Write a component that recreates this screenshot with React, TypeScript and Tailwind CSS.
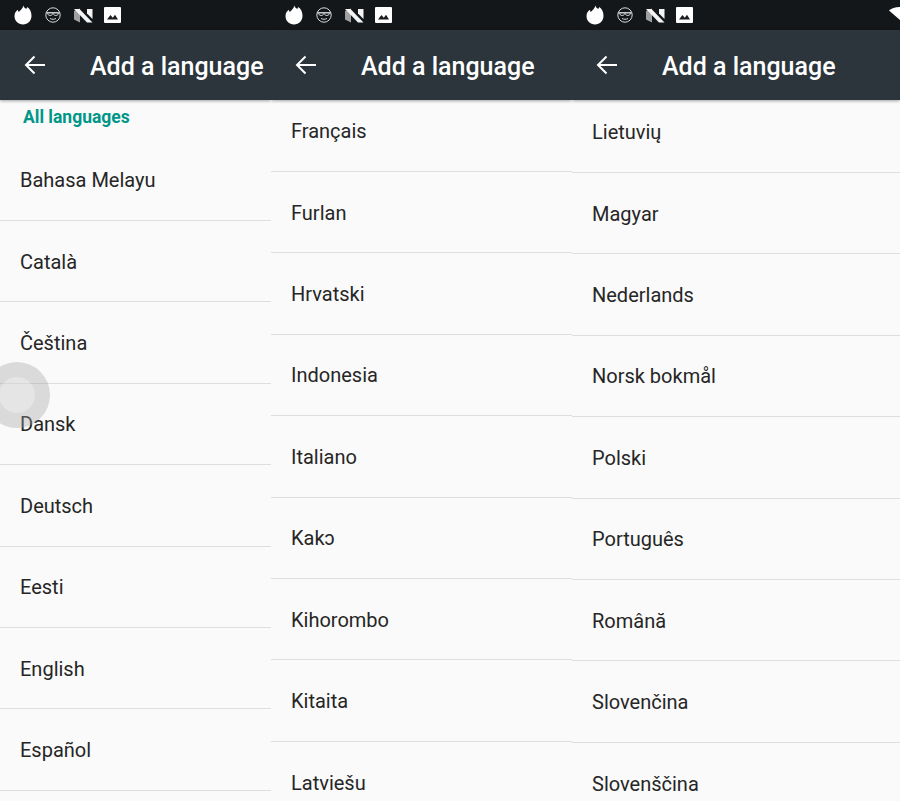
import React from 'react';

const COLUMNS = [
  {
    width: 'w-[271px]',
    items: ['Bahasa Melayu', 'Català', 'Čeština', 'Dansk', 'Deutsch', 'Eesti', 'English', 'Español'],
    header: true,
    offset: '',
  },
  {
    width: 'w-[301px]',
    items: ['Français', 'Furlan', 'Hrvatski', 'Indonesia', 'Italiano', 'Kakɔ', 'Kihorombo', 'Kitaita', 'Latviešu'],
    header: false,
    offset: '-mt-[9.500px]',
  },
  {
    width: 'w-[328px]',
    items: ['Lietuvių', 'Magyar', 'Nederlands', 'Norsk bokmål', 'Polski', 'Português', 'Română', 'Slovenčina', 'Slovenščina'],
    header: false,
    offset: '-mt-[8.500px]',
  },
];

function StatusIcons() {
  return (
    <div className="flex items-center">
      {/* Flame */}
      <svg width="18" height="20" viewBox="0 0 18 20" className="ml-[14px]">
        <path
          d="M9.5 0.5c.4 2.2 1.6 3 3 3.2.4-.5.6-1 .7-1.6C15.900 4 17.500 6.700 17.500 10.800 17.500 15.900 13.900 19.500 9 19.500S.5 15.900.5 11C.5 7.800 2.300 6 4 4.800c0 1 .2 1.700.8 2.200C6.300 5.500 8.800 3.500 9.500 .5z"
          fill="#fff"
        />
      </svg>
      {/* Face with sunglasses */}
      <svg width="16" height="16" viewBox="0 0 16 16" className="ml-[13px]" fill="none" stroke="#d8d8d8" strokeWidth="1">
        <circle cx="8" cy="8" r="7.2" />
        <path d="M1 5.800h14" />
        <path d="M2.500 5.800c0 3.300 4.600 3.600 5.200.8h.6c.6 2.800 5.200 2.500 5.200-.8z" />
        <path d="M5 11.500c1.800 1 4.200 1 6 0" />
      </svg>
      {/* N logo */}
      <svg width="19" height="15" viewBox="0 0 19 15" className="ml-[13px]">
        <path d="M0 3 6 .5v14L0 11.500z" fill="#a0a0a0" />
        <path d="M0 1h5.500L18.500 14.500h-5.500z" fill="#f4f4f4" />
        <path d="M13 1h5.500v10L13 5.500z" fill="#f4f4f4" />
      </svg>
      {/* Picture */}
      <svg width="17" height="16" viewBox="0 0 17 16" className="ml-[11px]">
        <rect width="17" height="16" rx="1" fill="#fff" />
        <path d="M3 12.500 6.500 8l2.300 2.800L11 7.800l3 4.700z" fill="#1a1c1f" />
      </svg>
    </div>
  );
}

function Column({ width, items, header, offset }: (typeof COLUMNS)[number]) {
  return (
    <div className={`${width} shrink-0 h-[801px] overflow-hidden flex flex-col bg-[#fafafa]`}>
      <div className="relative z-10 h-[30px] shrink-0 flex items-center bg-[#14171a]">
        <StatusIcons />
      </div>
      <div className="relative z-10 h-[70px] shrink-0 flex items-center bg-[#2b353b] shadow-[0_1px_3px_rgba(0,0,0,0.35)]">
        <svg width="22" height="20" viewBox="0 0 22 20" className="ml-[24px]" fill="none" stroke="#fff" strokeWidth="2">
          <path d="M21 10H2M10.500 1.500 2 10l8.500 8.500" />
        </svg>
        <span className="ml-[44px] pt-[4px] text-[25px] font-medium text-white whitespace-nowrap">Add a language</span>
      </div>
      {header && (
        <div className="h-[39.500px] shrink-0 pl-[23px] pt-[5px] text-[17.500px] leading-6 font-bold text-[#009688]">
          All languages
        </div>
      )}
      <div className={offset}>
        {items.map((label) => (
          <div
            key={label}
            className="h-[81.430px] flex items-center pl-5 pt-[1px] text-[20px] text-[#262626] border-b border-[#dedede]"
          >
            {label}
          </div>
        ))}
      </div>
    </div>
  );
}

export default function App() {
  return (
    <div className="relative w-[900px] h-[801px] overflow-hidden flex font-['Roboto',sans-serif]">
      {COLUMNS.map((col) => (
        <Column key={col.width} {...col} />
      ))}

      {/* Wifi glyph cut off by the right edge */}
      <svg width="11" height="13" viewBox="0 0 11 13" className="absolute top-[7px] right-0 z-20">
        <path d="M0 3.500C3.500 .5 8 0 11 0v13z" fill="#fff" />
      </svg>

      {/* Touch indicator */}
      <div className="absolute left-[-16px] top-[362px] z-20 w-[66px] h-[66px] rounded-full bg-[#9e9e9e]/35 flex items-center justify-center">
        <div className="w-[36px] h-[36px] rounded-full bg-white/30" />
      </div>
    </div>
  );
}
